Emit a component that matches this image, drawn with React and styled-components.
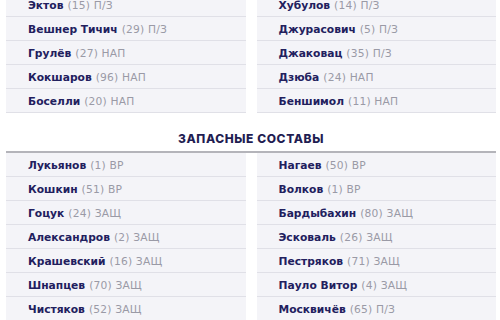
import React from "react";
import styled, { createGlobalStyle } from "styled-components";

const Global = createGlobalStyle`
  html, body { margin: 0; padding: 0; background: #ffffff; }
  body { font-family: "DejaVu Sans", Inter, sans-serif; overflow: hidden; }
`;

const Page = styled.div`
  width: 500px;
  height: 320px;
  overflow: hidden;
  padding: 0 4px 0 6px;
  box-sizing: border-box;
`;

const Inner = styled.div`
  margin-top: -7px;
`;

const Columns = styled.div`
  display: grid;
  grid-template-columns: 1fr 1fr;
  column-gap: 11px;
  border-top: ${(p) => (p.$divider ? "2px solid #b4b4ba" : "none")};
`;

const List = styled.ul`
  list-style: none;
  margin: 0;
  padding: 0;
`;

const Row = styled.li`
  height: 24px;
  box-sizing: border-box;
  padding: 1px 0 0 22px;
  display: flex;
  align-items: center;
  background: #f4f4f8;
  border-bottom: 1px solid #e0e0e7;
  font-size: 10.7px;
  white-space: nowrap;
`;

const Name = styled.span`
  font-weight: 700;
  color: #22205e;
  margin-right: 4px;
`;

const Meta = styled.span`
  font-weight: 400;
  color: #9a9aa6;
  letter-spacing: 0.2px;
`;

const Title = styled.h2`
  margin: 0;
  height: 38px;
  box-sizing: border-box;
  padding-top: 12px;
  display: flex;
  align-items: center;
  justify-content: center;
  font-family: Inter, sans-serif;
  font-size: 12px;
  font-weight: 800;
  letter-spacing: 0.6px;
  color: #1f1d52;
  text-transform: uppercase;
`;

const mainLeft = [
  ["Эктов", "(15) П/З"],
  ["Вешнер Тичич", "(29) П/З"],
  ["Грулёв", "(27) НАП"],
  ["Кокшаров", "(96) НАП"],
  ["Боселли", "(20) НАП"],
];
const mainRight = [
  ["Хубулов", "(14) П/З"],
  ["Джурасович", "(5) П/З"],
  ["Джаковац", "(35) П/З"],
  ["Дзюба", "(24) НАП"],
  ["Беншимол", "(11) НАП"],
];
const subLeft = [
  ["Лукьянов", "(1) ВР"],
  ["Кошкин", "(51) ВР"],
  ["Гоцук", "(24) ЗАЩ"],
  ["Александров", "(2) ЗАЩ"],
  ["Крашевский", "(16) ЗАЩ"],
  ["Шнапцев", "(70) ЗАЩ"],
  ["Чистяков", "(52) ЗАЩ"],
];
const subRight = [
  ["Нагаев", "(50) ВР"],
  ["Волков", "(1) ВР"],
  ["Бардыбахин", "(80) ЗАЩ"],
  ["Эсковаль", "(26) ЗАЩ"],
  ["Пестряков", "(71) ЗАЩ"],
  ["Пауло Витор", "(4) ЗАЩ"],
  ["Москвичёв", "(65) П/З"],
];

const PlayerList = ({ items }) => (
  <List>
    {items.map(([n, m]) => (
      <Row key={n}>
        <Name>{n}</Name>
        <Meta>{m}</Meta>
      </Row>
    ))}
  </List>
);

export default function App() {
  return (
    <Page>
      <Global />
      <Inner>
        <Columns>
          <PlayerList items={mainLeft} />
          <PlayerList items={mainRight} />
        </Columns>
        <Title>Запасные составы</Title>
        <Columns $divider>
          <PlayerList items={subLeft} />
          <PlayerList items={subRight} />
        </Columns>
      </Inner>
    </Page>
  );
}
